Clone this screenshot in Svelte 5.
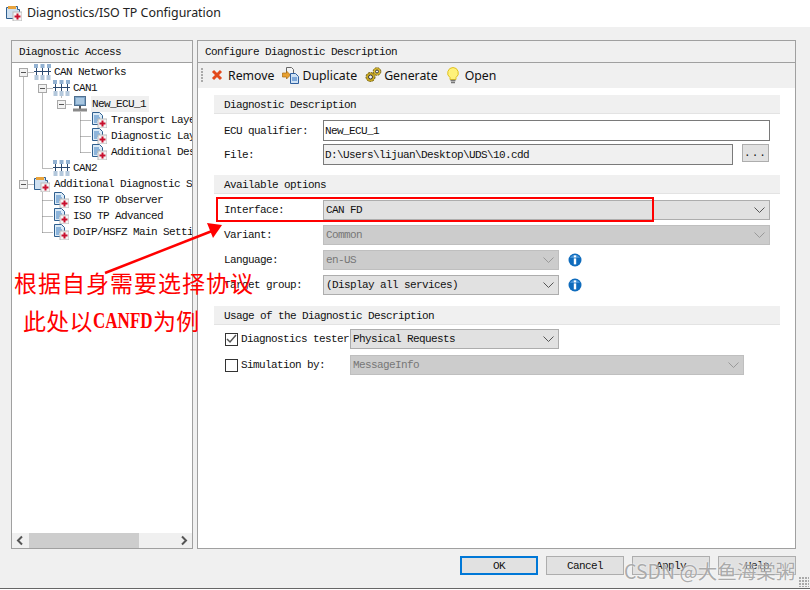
<script>
  const tree = [
    { level: 0, toggle: true, icon: 'net', text: 'CAN Networks' },
    { level: 1, toggle: true, icon: 'net', text: 'CAN1' },
    { level: 2, toggle: true, icon: 'ecu', text: 'New_ECU_1', selected: true },
    { level: 3, icon: 'doc', text: 'Transport Layer' },
    { level: 3, icon: 'doc', text: 'Diagnostic Layer' },
    { level: 3, icon: 'doc', text: 'Additional Descriptions' },
    { level: 1, icon: 'net', text: 'CAN2' },
    { level: 0, toggle: true, icon: 'folder', text: 'Additional Diagnostic Settings' },
    { level: 1, icon: 'doc', text: 'ISO TP Observer' },
    { level: 1, icon: 'doc', text: 'ISO TP Advanced' },
    { level: 1, icon: 'doc', text: 'DoIP/HSFZ Main Settings' }
  ];

  // dotted tree connectors, tree-area coordinates
  const lines = [
    [11, 13, 11, 120], [16, 8, 22, 8], [30, 28, 30, 104], [35, 24, 41, 24],
    [49, 30, 49, 34], [54, 40, 60, 40], [68, 47, 68, 88], [68, 56, 80, 56],
    [68, 72, 80, 72], [68, 88, 80, 88], [30, 104, 41, 104], [16, 120, 22, 120],
    [30, 127, 30, 168], [30, 136, 42, 136], [30, 152, 42, 152], [30, 168, 42, 168]
  ];

  const buttons = ['OK', 'Cancel', 'Apply', 'Help'];
</script>

{#snippet chevron(color)}
  <svg class="chev" width="11" height="6" viewBox="0 0 11 6"><path d="M.5.5l5 5 5-5" fill="none" stroke={color} stroke-width="1" /></svg>
{/snippet}

{#snippet info()}
  <svg class="info" width="14" height="14" viewBox="0 0 14 14">
    <circle cx="7" cy="7" r="6.500" fill="#0f6cbd" />
    <path d="M2 5a5.500 5 0 0 1 10 0z" fill="#6aaee6" opacity=".6" />
    <rect x="5.800" y="2.400" width="2.400" height="2" fill="#fff" />
    <rect x="5.800" y="5.400" width="2.400" height="6" fill="#fff" />
  </svg>
{/snippet}

{#snippet doc()}
  <svg width="16" height="16" viewBox="0 0 16 16">
    <path d="M1.500.5h7l3 3v9h-10z" fill="#dcebf7" stroke="#2f5f8f" />
    <path d="M3 4h5M3 6h6M3 8h4M3 10h3" stroke="#3f7fbf" />
    <rect x="7" y="7" width="9" height="9" fill="#f4f4f4" stroke="#b9b9b9" />
    <path d="M11.500 8.500v6M8.500 11.500h6" stroke="#c8102e" stroke-width="2" />
  </svg>
{/snippet}

{#snippet treeIcon(name)}
  {#if name === 'net'}
    <svg width="17" height="16" viewBox="0 0 17 16">
      <path d="M0 0h4v4H0zM6.500 0h4v4h-4zM13 0h4v4h-4z" fill="#93b2d2" />
      <path d="M2.500 4v7M8.500 4v7M14.500 4v7" stroke="#2c4a70" />
      <path d="M0 7.500h17" stroke="#2c4a70" />
      <path d="M0.500 11h4v5h-4zM6.500 11h4v5h-4zM12.500 11h4v5h-4z" fill="#b4c8dc" />
    </svg>
  {:else if name === 'ecu'}
    <svg width="16" height="16" viewBox="0 0 16 16">
      <rect x="2.500" y=".5" width="11" height="9" fill="#7fa6c9" stroke="#4f6f8f" />
      <rect x="4" y="2" width="8" height="6" fill="#a8c6e0" />
      <path d="M8 10v3" stroke="#555" stroke-width="2" />
      <rect x="1" y="12.500" width="14" height="3" fill="#8a8a8a" />
    </svg>
  {:else if name === 'folder'}
    <svg width="16" height="16" viewBox="0 0 16 16">
      <path d="M.5 2.500h5l1-1h5v3h2v9H.5z" fill="#cfe0f0" stroke="#2f5f8f" />
      <path d="M2 1h8v3H2z" fill="#e8a33c" />
      <rect x="7" y="7" width="9" height="9" fill="#f4f4f4" stroke="#b9b9b9" />
      <path d="M11.500 8.500v6M8.500 11.500h6" stroke="#c8102e" stroke-width="2" />
    </svg>
  {:else}
    {@render doc()}
  {/if}
{/snippet}

<div class="window">
  <header class="titlebar">
    <span class="title-icon">{@render treeIcon('folder')}</span>
    <span>Diagnostics/ISO TP Configuration</span>
  </header>

  <main class="main">
    <section class="panel left">
      <div class="panel-head">Diagnostic Access</div>
      <div class="tree">
        <svg class="connectors" width="180" height="200">
          {#each lines as [x1, y1, x2, y2]}
            <line x1={x1 + 0.5} y1={y1 + 0.5} x2={x2 + 0.5} y2={y2 + 0.5} stroke="#777" stroke-dasharray="1 1" />
          {/each}
        </svg>
        {#each tree as node}
          <div class="node" style="padding-left: {7 + node.level * 19}px">
            <span class="toggle-cell">
              {#if node.toggle}<span class="toggle"></span>{/if}
            </span>
            <span class="node-icon">{@render treeIcon(node.icon)}</span>
            <span class="node-text" class:selected={node.selected}>{node.text}</span>
          </div>
        {/each}
      </div>
      <div class="hscroll">
        <svg width="17" height="15" viewBox="0 0 17 15"><path d="M10 3.500l-4 4 4 4" fill="none" stroke="#555" stroke-width="2" /></svg>
        <div class="track"><div class="thumb"></div></div>
        <svg width="17" height="15" viewBox="0 0 17 15"><path d="M7 3.500l4 4-4 4" fill="none" stroke="#555" stroke-width="2" /></svg>
      </div>
    </section>

    <section class="panel right">
      <div class="panel-head">Configure Diagnostic Description</div>
      <div class="toolbar">
        <span class="grip"></span>
        <span class="tool remove">
          <svg width="12" height="12" viewBox="0 0 12 12"><path d="M2 2l8 8M10 2l-8 8" stroke="#e2491b" stroke-width="3" /></svg>
          Remove
        </span>
        <span class="tool dup">
          <svg width="17" height="17" viewBox="0 0 17 17">
            <path d="M4.500.5h5l2 2v5h-7z" fill="#f4f4f4" stroke="#666" />
            <path d="M.5 6h4v-2l4 4-4 4v-2h-4z" fill="#e8a030" stroke="#a86a10" stroke-width=".7" />
            <path d="M8.500 6.500h5l3 3v7h-8z" fill="#cfe2f4" stroke="#2f5f9f" />
            <path d="M10 11h5M10 13h5" stroke="#2f6fbf" />
          </svg>
          Duplicate
        </span>
        <span class="tool gen">
          <svg width="17" height="16" viewBox="0 0 17 16">
            <circle cx="5.500" cy="10" r="4.500" fill="#c9a820" stroke="#6b5a10" stroke-dasharray="2 1" />
            <circle cx="5.500" cy="10" r="2" fill="#f2f2f2" stroke="#3a3a3a" />
            <circle cx="12" cy="4.500" r="3.800" fill="#dcbc30" stroke="#6b5a10" stroke-dasharray="2 1" />
            <circle cx="12" cy="4.500" r="1.500" fill="#f2f2f2" stroke="#3a3a3a" />
          </svg>
          Generate
        </span>
        <span class="tool open">
          <svg width="14" height="17" viewBox="0 0 14 17">
            <path d="M7 .5a5.500 5.500 0 0 0-3 10v2h6v-2a5.500 5.500 0 0 0-3-10z" fill="#fff27a" stroke="#e0c020" />
            <path d="M4.500 13.500h5M5 15.500h4" stroke="#777" stroke-width="1.500" />
          </svg>
          Open
        </span>
      </div>

      <div class="content">
        <h3 class="section">Diagnostic Description</h3>
        <div class="row first">
          <span class="label">ECU qualifier:</span>
          <div class="input">New_ECU_1</div>
        </div>
        <div class="row">
          <span class="label">File:</span>
          <div class="input file">D:\Users\lijuan\Desktop\UDS\10.cdd</div>
          <button class="browse">...</button>
        </div>

        <h3 class="section gap">Available options</h3>
        <div class="row opt first">
          <span class="label">Interface:</span>
          <div class="combo wide"><span>CAN FD</span>{@render chevron('#555')}</div>
        </div>
        <div class="row opt">
          <span class="label">Variant:</span>
          <div class="combo wide off"><span>Common</span>{@render chevron('#999')}</div>
        </div>
        <div class="row opt">
          <span class="label">Language:</span>
          <div class="combo narrow off"><span>en-US</span>{@render chevron('#999')}</div>
          {@render info()}
        </div>
        <div class="row opt">
          <span class="label">Target group:</span>
          <div class="combo narrow"><span>(Display all services)</span>{@render chevron('#555')}</div>
          {@render info()}
        </div>

        <h3 class="section gap usage-head">Usage of the Diagnostic Description</h3>
        <div class="row opt check first">
          <span class="box">
            <svg width="11" height="10" viewBox="0 0 11 10"><path d="M1 5l3 3 6-7" fill="none" stroke="#555" stroke-width="1.500" /></svg>
          </span>
          <span class="check-label">Diagnostics tester</span>
          <div class="combo usage"><span>Physical Requests</span>{@render chevron('#555')}</div>
        </div>
        <div class="row opt check">
          <span class="box"></span>
          <span class="check-label">Simulation by:</span>
          <div class="combo sim off"><span>MessageInfo</span>{@render chevron('#999')}</div>
        </div>
      </div>
    </section>
  </main>

  <footer class="footer">
    {#each buttons as label, i}
      <button class="btn" class:default={i === 0}>{label}</button>
    {/each}
    <span class="size-grip"></span>
  </footer>

  <!-- annotations pasted over the dialog -->
  <div class="red-box"></div>
  <svg class="arrow" width="810" height="590">
    <path d="M105 273L212 231" stroke="#f00" stroke-width="2.500" />
    <path d="M207 223L222 225L213 238z" fill="#f00" />
  </svg>
  <div class="note one">根据自身需要选择协议</div>
  <div class="note two">此处以<span class="latin">CANFD</span>为例</div>
  <div class="watermark">CSDN @大鱼海棠粥</div>
</div>

<style>
  :global(body) {
    margin: 0;
    background: #fff;
  }

  .window {
    position: relative;
    width: 810px;
    height: 590px;
    overflow: hidden;
    display: flex;
    flex-direction: column;
    background: #f0f0f0;
    border-bottom: 1px solid #fff;
    box-sizing: border-box;
    font: 11px/16px "Liberation Mono", monospace;
    letter-spacing: -0.6px;
    color: #111;
  }

  .titlebar {
    height: 25px;
    flex: none;
    display: flex;
    align-items: center;
    gap: 5px;
    padding: 0 0 2px 6px;
    background: #fff;
    font: 12.400px "Noto Sans", sans-serif;
    letter-spacing: 0;
    color: #222;
  }

  .title-icon {
    display: flex;
  }

  .main {
    flex: 1;
    min-height: 0;
    display: flex;
    gap: 4px;
    padding: 13px 14px 0 11px;
  }

  .panel {
    display: flex;
    flex-direction: column;
    min-width: 0;
    background: #fff;
    border: 1px solid #a0a0a0;
  }

  .left {
    width: 182px;
    flex: none;
    box-sizing: border-box;
  }

  .right {
    flex: 1;
  }

  .panel-head {
    height: 21px;
    flex: none;
    padding-left: 7px;
    display: flex;
    align-items: center;
    background: #f0f0f0;
    border-bottom: 1px solid #a0a0a0;
  }

  .tree {
    position: relative;
    flex: 1;
    padding-top: 1px;
    overflow: hidden;
  }

  .connectors {
    position: absolute;
    left: 0;
    top: 1px;
  }

  .node {
    position: relative;
    height: 16px;
    display: flex;
    align-items: center;
    white-space: nowrap;
  }

  .toggle-cell {
    width: 15px;
    flex: none;
  }

  .toggle {
    display: block;
    position: relative;
    width: 7px;
    height: 7px;
    background: #f2f2f2;
    border: 1px solid #a8a8a8;
  }

  .toggle::after {
    content: "";
    position: absolute;
    left: 1px;
    top: 3px;
    width: 5px;
    height: 1px;
    background: #555;
  }

  .node-icon {
    width: 19px;
    flex: none;
    display: flex;
    background: #fff;
  }

  .node-text {
    padding: 0 1px;
  }

  .selected {
    background: #f0f0f0;
    padding-right: 3px;
  }

  .hscroll {
    height: 15px;
    flex: none;
    display: flex;
    background: #f0f0f0;
  }

  .track {
    flex: 1;
  }

  .thumb {
    width: 110px;
    height: 15px;
    background: #cdcdcd;
  }

  .toolbar {
    height: 24px;
    flex: none;
    display: flex;
    align-items: center;
    padding: 0 0 1px 3px;
    background: #f0f0f0;
    font: 12.300px "Noto Sans", sans-serif;
    letter-spacing: 0;
    color: #111;
  }

  .grip {
    width: 2px;
    height: 15px;
    margin-right: 8px;
    background: repeating-linear-gradient(#aaa 0 2px, transparent 2px 3px);
  }

  .tool {
    display: flex;
    align-items: center;
    margin-right: 8px;
  }

  .remove svg {
    margin-right: 5px;
  }

  .dup svg {
    margin-right: 3px;
  }

  .gen svg {
    margin-right: 2px;
  }

  .open svg {
    margin-right: 5px;
  }

  .content {
    flex: 1;
    padding: 7px 15px 0 16px;
  }

  .section {
    margin: 0;
    height: 17px;
    padding: 1px 0 0 10px;
    display: flex;
    align-items: center;
    font: inherit;
    letter-spacing: inherit;
    background: #f0f0f0;
    border-bottom: 1px solid #e3e3e3;
  }

  .section.gap {
    margin-top: 10px;
  }

  .section.usage-head {
    margin-top: 11px;
  }

  .row {
    display: flex;
    align-items: center;
    height: 21px;
    margin: 3px 10px 0 10px;
  }

  .row.first {
    margin-top: 6px;
  }

  .row.opt {
    height: 20px;
    margin-top: 5px;
  }

  .row.opt.first {
    margin-top: 6px;
  }

  .row.check {
    margin-top: 6px;
    margin-left: 11px;
  }

  .row.check.first {
    margin-top: 4px;
  }

  .label {
    width: 99px;
    flex: none;
  }

  .input {
    flex: 1;
    height: 21px;
    box-sizing: border-box;
    padding-left: 1px;
    display: flex;
    align-items: center;
    background: #fff;
    border: 1px solid #7a7a7a;
  }

  .file {
    flex: none;
    width: 410px;
    background: #f0f0f0;
  }

  .browse {
    width: 27px;
    height: 18px;
    margin: 0 0 3px 9px;
    padding: 0;
    background: #e1e1e1;
    border: 1px solid #adadad;
    font: inherit;
    letter-spacing: 1px;
    color: #111;
  }

  .combo {
    height: 20px;
    box-sizing: border-box;
    display: flex;
    align-items: center;
    justify-content: space-between;
    padding: 0 4px 0 2px;
    background: #e1e1e1;
    border: 1px solid #adadad;
  }

  .wide {
    flex: 1;
  }

  .narrow {
    width: 236px;
  }

  .off {
    background: #ccc;
    border-color: #bfbfbf;
    color: #777;
  }

  .chev {
    flex: none;
  }

  .info {
    margin-left: 9px;
  }

  .box {
    width: 11px;
    height: 11px;
    flex: none;
    display: flex;
    align-items: center;
    justify-content: center;
    background: #fff;
    border: 1px solid #333;
  }

  .check-label {
    width: 109px;
    flex: none;
    padding-left: 3px;
    white-space: nowrap;
  }

  .usage {
    width: 209px;
  }

  .sim {
    width: 394px;
  }

  .footer {
    position: relative;
    height: 40px;
    flex: none;
    display: flex;
    justify-content: flex-end;
    gap: 8px;
    padding: 7px 14px 0 0;
    box-sizing: border-box;
    border-bottom: 1px solid #666;
  }

  .btn {
    width: 78px;
    height: 19px;
    padding: 0;
    background: #e1e1e1;
    border: 1px solid #adadad;
    font: inherit;
    letter-spacing: inherit;
    color: #111;
  }

  .default {
    border: 2px solid #0078d7;
  }

  .size-grip {
    position: absolute;
    right: 1px;
    bottom: 1px;
    width: 10px;
    height: 10px;
    background: radial-gradient(circle at 1px 1px, #aaa 1px, transparent 1px) 0 0 / 3px 3px;
  }

  .red-box {
    position: absolute;
    left: 216px;
    top: 197px;
    width: 434px;
    height: 21px;
    border: 2px solid #f00;
  }

  .arrow {
    position: absolute;
    left: 0;
    top: 0;
    pointer-events: none;
  }

  .note {
    position: absolute;
    font-family: "Noto Sans CJK SC", sans-serif;
    color: #f00;
    white-space: nowrap;
    letter-spacing: 0;
  }

  .one {
    left: 14px;
    top: 266px;
    font-size: 23px;
    line-height: 32px;
    letter-spacing: 1px;
  }

  .two {
    left: 23px;
    top: 304px;
    font-size: 23px;
    line-height: 32px;
    letter-spacing: 0.300px;
  }

  /* tall, narrow capitals like the pasted label */
  .latin {
    display: inline-block;
    width: 60px;
    font: 700 24px/32px "Liberation Serif", serif;
    letter-spacing: 0;
    transform: scaleX(0.71);
    transform-origin: left;
    vertical-align: top;
  }

  .watermark {
    position: absolute;
    left: 624px;
    top: 559px;
    font: 19.500px/24px "Noto Sans CJK SC", sans-serif;
    letter-spacing: 0;
    color: rgba(150, 150, 150, 0.8);
    text-shadow: 0 0 2px #fff;
    white-space: nowrap;
  }
</style>
